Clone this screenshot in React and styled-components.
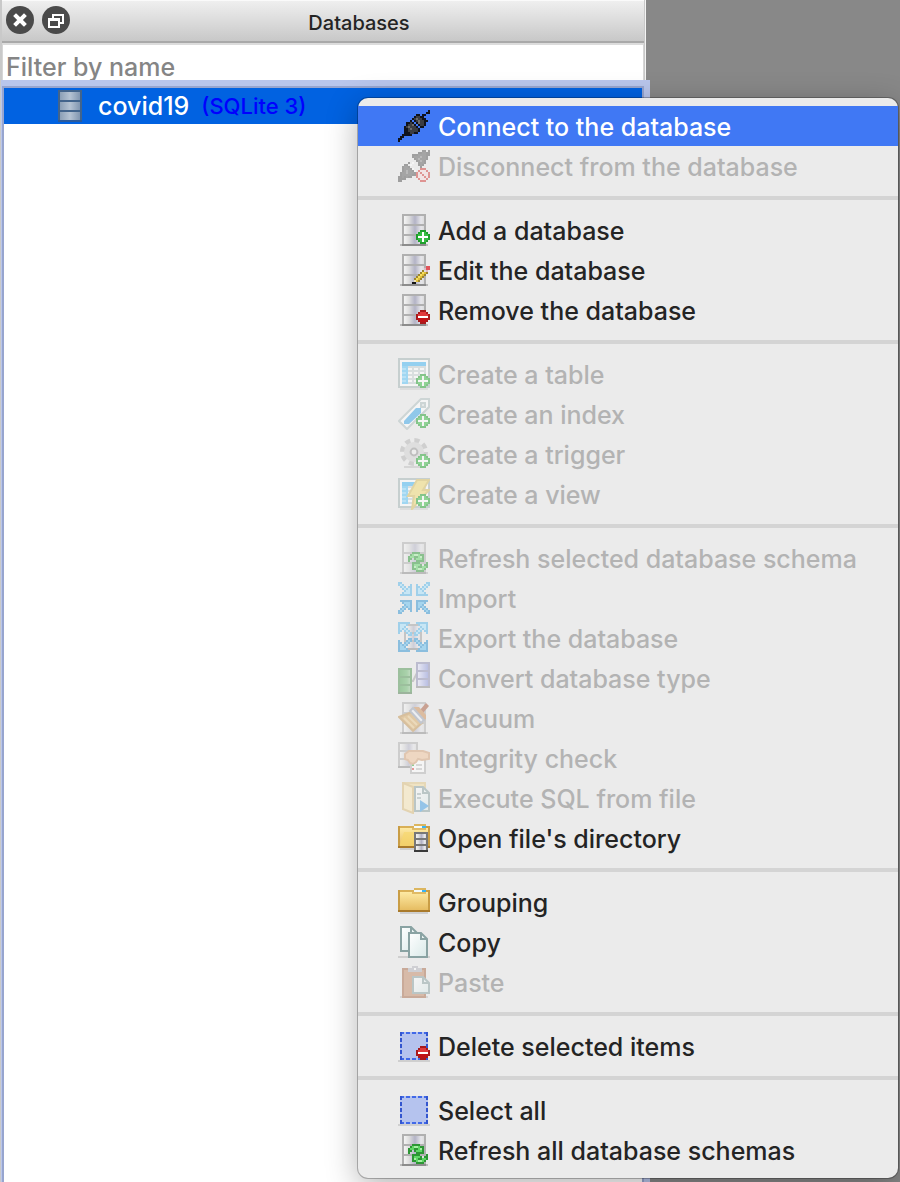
import React from "react";
import styled, { createGlobalStyle } from "styled-components";

const GlobalStyle = createGlobalStyle`
  * { box-sizing: border-box; }
  body {
    margin: 0;
    background: #888888;
    font-family: Inter, "Liberation Sans", sans-serif;
    -webkit-font-smoothing: antialiased;
  }
  button, input { font-family: inherit; }
`;

/* ---------- sprites ---------- */

function Sprite({ rows, colors, x = 0, y = 0 }) {
  const out = [];
  rows.forEach((row, r) => {
    let c = 0;
    while (c < row.length) {
      const ch = row[c];
      let end = c + 1;
      while (end < row.length && row[end] === ch) end++;
      if (colors[ch]) {
        out.push(
          <rect key={`${r}-${c}`} x={x + c} y={y + r} width={end - c} height={1} fill={colors[ch]} />
        );
      }
      c = end;
    }
  });
  return <g shapeRendering="crispEdges">{out}</g>;
}

const PLUG = [
  "...............k",
  "..............kk",
  ".........kk.kk..",
  "........kggkk...",
  ".......kgGggkk..",
  "......k.kgGggkk.",
  "....kkgk.kGggk..",
  "....kggGk.kggk..",
  "...kgGgggk.kk...",
  "...kkgGgggk.....",
  "...kkgggggk.....",
  "...kkkggkk......",
  "..kkkkk.........",
  ".kk.............",
  "kk..............",
  "k...............",
];

const UNPLUGGED = [
  "............kk.k",
  "..........kkggkk",
  ".......kkkggggkk",
  ".......kgggGggk.",
  "........kgGgggk.",
  ".........kgGgk..",
  ".....k.w..kggk..",
  "...kk.w...kgk...",
  "..kggk.....k....",
  "..kgggkw........",
  "..kgGggkw.......",
  ".kggGgggk.......",
  ".kgggggkk.......",
  "kkgkgkk.........",
  "kkkk............",
  "kk..............",
];

const FORBIDDEN = ["..rrr..", ".rwwwr.", "rwrwwwr", "rwwrwwr", "rwwwrwr", ".rwwwr.", "..rrr.."];
const PLUS = ["..ggg..", ".gGwGg.", "gGGwGGg", "gwwwwwg", "gGGwGGg", ".gGwGg.", "..ggg.."];
const MINUS = ["..ddd..", ".drrrd.", "drrrrrd", "dwwwwwd", "dDDDDDd", ".dDDDd.", "..ddd.."];
const REFRESH = [
  "..dddd....",
  ".dgGGgdd..",
  "dggddgGd..",
  "dd.dgggd..",
  "d...dddd..",
  "..dddd...d",
  "..dgggd.dd",
  "..dGgddggd",
  "..ddgGGgd.",
  "....dddd..",
];
const ARROW = [
  "dd.....",
  "dbd...d",
  ".dbd.dd",
  "..dbdbd",
  "...dbbd",
  "..dbbbd",
  ".dddddd",
];
const PENCIL = [
  ".......rr",
  "......prr",
  ".....yap.",
  "....yYoy.",
  "...yYoy..",
  "..yYoy...",
  ".yYoy....",
  ".woy.....",
  "kk.......",
];

const plusColors = { g: "#1f9e2c", G: "#35bd42", w: "#ffffff" };
const minusColors = { d: "#a81a1d", r: "#e0393c", D: "#c01216", w: "#ffffff" };
const refreshColors = { d: "#2c9634", g: "#5fd765", G: "#a6f0a4" };

const PlusBadge = () => <Sprite rows={PLUS} colors={plusColors} x={9} y={8} />;
const MinusBadge = () => <Sprite rows={MINUS} colors={minusColors} x={9} y={8} />;

function Cabinet({ x = 2, y = 0, w = 12, h = 15, fill = "url(#steel)", edge = "#b0b0b0", base = "#8c8c8c", shadow = true }) {
  const step = h / 3;
  return (
    <g shapeRendering="crispEdges">
      {shadow && <rect x={x - 1} y={y + h} width={w + 2} height="1" fill="#b9b9b9" />}
      <rect x={x} y={y} width={w} height={h} fill={edge} />
      <rect x={x} y={y + h} width={w} height="1" fill={base} />
      {[0, 1, 2].map((i) => (
        <rect key={i} x={x + 1} y={y + 1 + Math.round(step * i)} width={w - 2} height={Math.round(step) - 1} fill={fill} />
      ))}
    </g>
  );
}

const Grid = () => (
  <g shapeRendering="crispEdges">
    <rect width="16" height="15" fill="#a3b5b5" />
    <rect x="1" y="1" width="14" height="13" fill="#ffffff" />
    <rect x="2" y="2" width="12" height="11" fill="#c6d2d4" />
    <rect x="2" y="2" width="12" height="2" fill="#3fb6f5" />
    <rect x="2" y="4" width="3" height="9" fill="#58c4fa" />
    {[5, 7, 9, 11].map((cy) => [5, 8, 11].map((cx) => (
      <rect key={`${cx}-${cy}`} x={cx} y={cy} width="2" height="1" fill="#ffffff" />
    )))}
    {[5, 7, 9, 11].map((cy) => <rect key={cy} x="2" y={cy} width="2" height="1" fill="#8ad8ff" />)}
    <rect x="1" y="15" width="14" height="1" fill="#d0d0d0" />
  </g>
);

const Folder = () => (
  <g shapeRendering="crispEdges">
    <rect x="8" y="1" width="6" height="1" fill="#dcb65f" />
    <rect x="0" y="2" width="16" height="11" fill="#c99d45" />
    <rect x="1" y="2" width="7" height="1" fill="#d9b057" />
    <rect x="8" y="2" width="4" height="1" fill="#f4fafa" />
    <rect x="12" y="2" width="2" height="1" fill="#39b4f2" />
    <rect x="1" y="3" width="14" height="9" fill="url(#manila)" />
    <rect x="7" y="3" width="7" height="1" fill="#e0bb66" />
    <rect x="0" y="12" width="16" height="1" fill="#a97a2b" />
    <rect x="1" y="13" width="14" height="1" fill="#cfcfcf" />
  </g>
);

function Page({ x, y, w, h }) {
  return (
    <g>
      <path
        d={`M${x + 0.5} ${y + 0.5}h${w - 4}l3 3v${h - 4}h${1 - w}z`}
        fill="url(#paper)"
        stroke="#8aa3a3"
      />
      <path d={`M${x + w - 3.5} ${y + 0.5}v3h3`} fill="none" stroke="#8aa3a3" />
    </g>
  );
}

const Marquee = () => (
  <g shapeRendering="crispEdges">
    <rect x="0" y="15" width="16" height="1" fill="#cfcfcf" />
    <rect x="1" y="1" width="14" height="14" fill="#b5c3ee" />
    <path d="M1 1.500h14M1 14.500h14" stroke="#4169e8" strokeDasharray="2 1" />
    <path d="M1.500 1v14M14.500 1v14" stroke="#3356cf" strokeDasharray="2 1" />
  </g>
);

function Arrows({ outward }) {
  const cells = [[1, 1], [-1, 1], [1, -1], [-1, -1]];
  const far = outward ? 15 : 16;
  return cells.map(([sx, sy]) => (
    <g
      key={`${sx}${sy}`}
      transform={`translate(${sx > 0 ? 0 : far} ${sy > 0 ? 0 : far}) scale(${sx} ${sy})`}
    >
      <g transform={outward ? "translate(7 7) scale(-1 -1)" : undefined}>
        <Sprite rows={ARROW} colors={{ d: sy > 0 ? "#58b6ea" : "#2e92d2", b: sy > 0 ? "#a5e2ff" : "#63c0f2" }} />
      </g>
    </g>
  ));
}

const ICONS = {
  connect: <Sprite rows={PLUG} colors={{ k: "#10131c", g: "#3b3d42", G: "#6a6a6c" }} />,
  disconnect: (
    <>
      <Sprite rows={UNPLUGGED} colors={{ k: "#555555", g: "#626262", G: "#888888", w: "#ffffff" }} />
      <Sprite rows={FORBIDDEN} colors={{ r: "#d2403c", w: "#f7dcdc" }} x={9} y={9} />
    </>
  ),
  database: <Cabinet />,
  add: <><Cabinet /><PlusBadge /></>,
  edit: (
    <>
      <Cabinet />
      <Sprite
        rows={PENCIL}
        colors={{ r: "#e0555b", p: "#e0b9c4", a: "#dcdce4", w: "#f0e4b4", y: "#9d8630", Y: "#f7e05a", o: "#e0bd3a", k: "#141414" }}
        x={7}
        y={6}
      />
    </>
  ),
  remove: <><Cabinet /><MinusBadge /></>,
  table: <><Grid /><PlusBadge /></>,
  index: (
    <>
      <path d="M.5 11.500L11.500.5h4v4L4.500 15.500z" fill="#fff" stroke="#b0c0c0" />
      <path d="M3 11.500l6-6.500h2.500v2.500l-6 5.500H3z" fill="#37a6ea" />
      <rect x="11.500" y="2.500" width="2" height="2" fill="#dfe6e6" stroke="#b0c0c0" />
      <PlusBadge />
    </>
  ),
  trigger: (
    <>
      <circle cx="8" cy="7" r="5.500" fill="none" stroke="#b4b4b4" strokeWidth="3" strokeDasharray="2.400 1.920" />
      <circle cx="8" cy="7" r="3.500" fill="#dcdcdc" stroke="#d2d2d2" strokeWidth="3" />
      <circle cx="8" cy="7" r="1.700" fill="#f0f0f0" stroke="#959595" />
      <rect x="3" y="14" width="9" height="1" fill="#c0c0c0" />
      <PlusBadge />
    </>
  ),
  view: (
    <>
      <Grid />
      <path d="M9.500 1h6l-3 5h3l-8.500 9.500 1-6.500h-3z" fill="#f3dc70" stroke="#d9bf5c" />
      <PlusBadge />
    </>
  ),
  refresh: <><Cabinet /><Sprite rows={REFRESH} colors={refreshColors} x={5} y={5} /></>,
  import: <Arrows />,
  export: (
    <>
      <Cabinet x={3} w={9} y={1} h={12} edge="#a0a0a0" shadow={false} />
      <Arrows outward />
    </>
  ),
  convert: (
    <>
      <path d="M6 9.500h1.500l2-4H11" fill="none" stroke="#a5a5a5" />
      <Cabinet x={0} y={3} w={7} h={12} fill="url(#moss)" edge="#4f9452" base="#4f7f50" shadow={false} />
      <Cabinet x={9} y={0} w={7} h={12} fill="url(#indigo)" edge="#8f8fb5" shadow={false} />
    </>
  ),
  vacuum: (
    <>
      <Cabinet />
      <path d="M11 4l3-3.500 1.500 1.500-3 3.500z" fill="#a8593c" />
      <path d="M.5 7.500L7 5l5 5.500-4.500 4z" fill="#d9a860" stroke="#c49552" />
      <path d="M3 8l5 5M5 7l4.500 4.500" stroke="#ecca8c" fill="none" />
      <path d="M8 2.500h2.500l3.500 4v2l-2 1.500-5-5.500z" fill="#cf8f55" />
      <path d="M7.500 3l5.500 6-1.500 1.500-5.500-6z" fill="#eef1f8" stroke="#9aa3b2" />
    </>
  ),
  integrity: (
    <>
      <Cabinet x={0} w={10} h={12} shadow={false} />
      <g shapeRendering="crispEdges">
        <rect x="6" y="7" width="8" height="9" fill="#b5b5b5" />
        <rect x="7" y="8" width="6" height="7" fill="#fff" />
        <rect x="7" y="11" width="1" height="1" fill="#35b53d" />
        <rect x="7" y="13" width="1" height="1" fill="#e04646" />
        <rect x="9" y="11" width="3" height="1" fill="#c5c5c5" />
        <rect x="9" y="13" width="3" height="1" fill="#c5c5c5" />
      </g>
      <path d="M3.500 6l2-1.500h7l3 1v3l-3.500.5-2-.5-1 1.500-1.500 1-1.500-.5-1-1.500-1.500-.5z" fill="#f1c59a" stroke="#d6a276" />
    </>
  ),
  execute: (
    <>
      <rect x="2" y="0" width="12" height="14" fill="#e2c684" />
      <rect x="3" y="1" width="10" height="12" fill="#f3dc9c" />
      <path d="M2.500.5l5 2v13l-5-2z" fill="#fbe9b5" stroke="#dcbd78" />
      <Page x={8} y={2} w={8} h={13} />
      <path d="M11 9l4.500 3L11 15z" fill="#3f9fe6" />
      <path d="M9.500 6h2M9.500 8h2" stroke="#a9b9b9" fill="none" />
    </>
  ),
  directory: (
    <>
      <Folder />
      <path d="M1 11l2-6h12v7H1z" fill="#f7d76e" opacity="0.7" />
      <Cabinet x={8} y={5} w={7} h={9} edge="#777777" base="#3a3a3a" shadow={false} />
    </>
  ),
  folder: <Folder />,
  copy: (
    <>
      <rect x="0" y="15" width="16" height="1" fill="#cfcfcf" />
      <Page x={1} y={0} w={9} h={13} />
      <Page x={5} y={3} w={10} h={13} />
    </>
  ),
  paste: (
    <>
      <rect x="1" y="15" width="14" height="1" fill="#c0c0c0" />
      <rect x="2.500" y="1.500" width="11" height="14" fill="#c58a68" stroke="#a96b4a" />
      <path d="M5.500 2.500v-1h2v-1h2v1h2v1z" fill="#fff" stroke="#b5b5bd" />
      <Page x={7} y={5} w={9} h={9} />
    </>
  ),
  deleteItems: <><Marquee /><MinusBadge /></>,
  selectAll: <Marquee />,
};

const IconSvg = styled.svg`
  display: block;
  flex: none;
  width: 32px;
  height: 32px;
  opacity: ${(p) => (p.$faded ? 0.5 : 1)};
`;

function Icon({ name, faded }) {
  return (
    <IconSvg viewBox="0 0 16 16" $faded={faded} aria-hidden="true">
      {ICONS[name]}
    </IconSvg>
  );
}

const HiddenDefs = styled.svg`
  position: absolute;
  width: 0;
  height: 0;
`;

function Gradients() {
  return (
    <HiddenDefs aria-hidden="true">
      <defs>
        <linearGradient id="steel">
          <stop offset="0" stopColor="#f4f4f4" />
          <stop offset="0.25" stopColor="#dedede" />
          <stop offset="0.55" stopColor="#b3b3c6" />
          <stop offset="0.85" stopColor="#e6e6ea" />
          <stop offset="1" stopColor="#dcdcdc" />
        </linearGradient>
        <linearGradient id="slate">
          <stop offset="0" stopColor="#8b9fb6" />
          <stop offset="0.5" stopColor="#b5c3d3" />
          <stop offset="1" stopColor="#8196b0" />
        </linearGradient>
        <linearGradient id="moss">
          <stop offset="0" stopColor="#4fa653" />
          <stop offset="0.7" stopColor="#6cba6e" />
          <stop offset="1" stopColor="#93cc94" />
        </linearGradient>
        <linearGradient id="indigo">
          <stop offset="0" stopColor="#e4e4fa" />
          <stop offset="1" stopColor="#8a94dc" />
        </linearGradient>
        <linearGradient id="manila" x2="0" y2="1">
          <stop offset="0" stopColor="#fdeaa4" />
          <stop offset="1" stopColor="#e6bd62" />
        </linearGradient>
        <linearGradient id="paper" x2="1" y2="1">
          <stop offset="0" stopColor="#ffffff" />
          <stop offset="1" stopColor="#d9e9e8" />
        </linearGradient>
      </defs>
    </HiddenDefs>
  );
}

/* ---------- window ---------- */

const Desktop = styled.div`
  position: relative;
  display: flex;
  min-height: 100vh;
  padding-right: 254px;
  overflow: hidden;
  background: #888888;
`;

const Dock = styled.section`
  flex: 1;
  display: flex;
  flex-direction: column;
  min-width: 0;
  padding: 0 1px 0 2px;
  background: #c9c9c9;
  border-right: 1px solid #f4f4f4;
`;

const TitleBar = styled.header`
  display: flex;
  align-items: center;
  height: 43px;
  padding: 0 4px 2px;
  border-top: 1px solid #fafafa;
  border-bottom: 2px solid #a9a9a9;
  background: linear-gradient(#efefef, #c8c8c8);
`;

const DockButton = styled.button`
  display: block;
  width: 28px;
  height: 28px;
  margin-right: 8px;
  padding: 0;
  border: 0;
  background: none;

  svg { display: block; }
`;

const Title = styled.h1`
  flex: 1;
  margin: 0;
  padding-top: 6px;
  text-align: center;
  font-size: 20px;
  line-height: 24px;
  font-weight: 500;
  color: #242424;
`;

const Filter = styled.input`
  display: block;
  width: 100%;
  height: 37px;
  padding: 8px 3px 0 3px;
  border: 1px solid #d6d6d6;
  border-top: 2px solid #dcdcdc;
  border-bottom: 0;
  border-radius: 0;
  outline: 0;
  background: #ffffff;
  font-size: 25px;
  line-height: 30px;
  font-weight: 500;
  color: #242424;

  &::placeholder { color: #858585; opacity: 1; }
`;

const Tree = styled.ul`
  position: relative;
  flex: 1;
  margin: 6px 0 0;
  padding: 0;
  list-style: none;
  background: #ffffff;
  border: 2px solid #97a5cf;
  border-bottom: 0;
  box-shadow: 0 0 0 6px #b9c6ec;
  clip-path: inset(-6px -6px 0 -1px);
`;

const TreeRow = styled.li`
  display: flex;
  align-items: center;
  gap: 12px;
  height: 36px;
  padding-left: 50px;
  background: #0162e1;
  color: #ffffff;
  font-size: 25px;
  line-height: 30px;
  font-weight: 500;
`;

const Engine = styled.span`
  font-size: 22px;
  color: #0000ff;
`;

/* ---------- context menu ---------- */

const Menu = styled.div`
  position: absolute;
  top: 98px;
  left: 358px;
  right: 2px;
  padding: 8px 0;
  border-radius: 10px;
  background: #ebebeb;
  box-shadow: 0 0 0 1px rgba(0, 0, 0, 0.25), 0 8px 32px rgba(0, 0, 0, 0.3);
`;

const MenuItem = styled.button`
  display: flex;
  align-items: center;
  gap: 8px;
  width: 100%;
  height: 40px;
  padding: 0 0 0 40px;
  border: 0;
  text-align: left;
  white-space: nowrap;
  font-size: 25px;
  line-height: 30px;
  font-weight: 500;
  color: ${(p) => (p.$active ? "#ffffff" : p.disabled ? "#b3b3b3" : "#242424")};
  background: ${(p) => (p.$active ? "#4078f4" : "transparent")};
`;

const Label = styled.span`
  padding-top: 2px;
`;

const Separator = styled.hr`
  height: 4px;
  margin: 10px 0;
  border: 0;
  background: #d4d4d4;
`;

const GROUPS = [
  [
    { icon: "connect", label: "Connect to the database", active: true },
    { icon: "disconnect", label: "Disconnect from the database", disabled: true },
  ],
  [
    { icon: "add", label: "Add a database" },
    { icon: "edit", label: "Edit the database" },
    { icon: "remove", label: "Remove the database" },
  ],
  [
    { icon: "table", label: "Create a table", disabled: true },
    { icon: "index", label: "Create an index", disabled: true },
    { icon: "trigger", label: "Create a trigger", disabled: true },
    { icon: "view", label: "Create a view", disabled: true },
  ],
  [
    { icon: "refresh", label: "Refresh selected database schema", disabled: true },
    { icon: "import", label: "Import", disabled: true },
    { icon: "export", label: "Export the database", disabled: true },
    { icon: "convert", label: "Convert database type", disabled: true },
    { icon: "vacuum", label: "Vacuum", disabled: true },
    { icon: "integrity", label: "Integrity check", disabled: true },
    { icon: "execute", label: "Execute SQL from file", disabled: true },
    { icon: "directory", label: "Open file's directory" },
  ],
  [
    { icon: "folder", label: "Grouping" },
    { icon: "copy", label: "Copy" },
    { icon: "paste", label: "Paste", disabled: true },
  ],
  [{ icon: "deleteItems", label: "Delete selected items" }],
  [
    { icon: "selectAll", label: "Select all" },
    { icon: "refresh", label: "Refresh all database schemas" },
  ],
];

export default function App() {
  return (
    <>
      <GlobalStyle />
      <Gradients />
      <Desktop>
        <Dock>
          <TitleBar>
            <DockButton aria-label="Close">
              <svg width="28" height="28" viewBox="0 0 28 28">
                <circle cx="14" cy="14" r="14" fill="#4a4a4a" />
                <path d="M10 10l8 8M18 10L10 18" stroke="#fff" strokeWidth="4" strokeLinecap="square" />
              </svg>
            </DockButton>
            <DockButton aria-label="Float">
              <svg width="28" height="28" viewBox="0 0 28 28">
                <circle cx="14" cy="14" r="14" fill="#4a4a4a" />
                <path d="M11 12V9h10v8h-3" fill="none" stroke="#fff" strokeWidth="2" />
                <path d="M7 13h10v8H7z" fill="#4a4a4a" stroke="#fff" strokeWidth="2" />
                <path d="M6 13.500h12" stroke="#fff" strokeWidth="3" />
              </svg>
            </DockButton>
            <Title>Databases</Title>
          </TitleBar>
          <Filter type="text" placeholder="Filter by name" aria-label="Filter by name" />
          <Tree>
            <TreeRow>
              <IconSvg viewBox="0 0 16 16" aria-hidden="true">
                <Cabinet fill="url(#slate)" edge="#42648c" base="#2a5a9c" shadow={false} />
              </IconSvg>
              <span>covid19</span>
              <Engine>(SQLite 3)</Engine>
            </TreeRow>
          </Tree>
        </Dock>
        <Menu role="menu" aria-label="Database actions">
          {GROUPS.map((items, g) => (
            <React.Fragment key={g}>
              {g > 0 && <Separator />}
              {items.map((item) => (
                <MenuItem key={item.label} role="menuitem" disabled={item.disabled} $active={item.active}>
                  <Icon name={item.icon} faded={item.disabled} />
                  <Label>{item.label}</Label>
                </MenuItem>
              ))}
            </React.Fragment>
          ))}
        </Menu>
      </Desktop>
    </>
  );
}
